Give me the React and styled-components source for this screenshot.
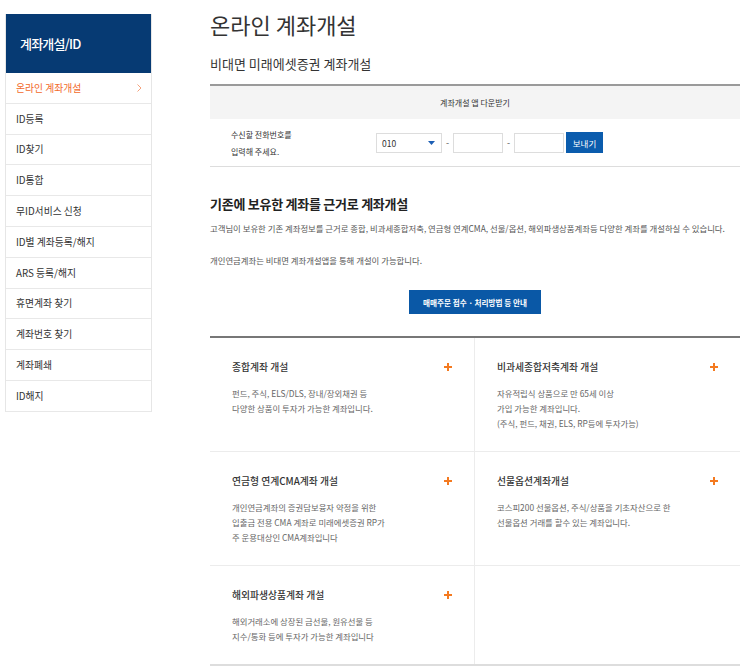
import React from "react";
import styled, { createGlobalStyle } from "styled-components";

const GlobalStyle = createGlobalStyle`
  body {
    margin: 0;
    background: #fff;
    font-family: "Noto Sans CJK KR", "Noto Sans", sans-serif;
    color: #333;
  }
  * { box-sizing: border-box; }
`;

const Page = styled.div`
  display: flex;
  align-items: flex-start;
  width: 743px;
`;

const SideBar = styled.nav`
  width: 147px;
  margin: 14px 0 0 5px;
  border-left: 1px solid #e6e6e6;
  border-right: 1px solid #e6e6e6;
`;

const SideTitle = styled.h2`
  margin: 0;
  height: 59px;
  display: flex;
  align-items: center;
  padding-left: 14px;
  background: #063a73;
  color: #fff;
  font-size: 13px;
  font-weight: 500;
  letter-spacing: -0.06em;
`;

const MenuItem = styled.div`
  height: 30.8px;
  display: flex;
  align-items: center;
  justify-content: space-between;
  padding: 0 9px 0 10px;
  border-bottom: 1px solid #e8e8e8;
  font-size: 9.8px;
  color: ${p => (p.$active ? "#f26a2b" : "#333")};
`;

const Main = styled.main`
  width: 530px;
  margin-left: 58px;
  padding-top: 8px;
`;

const PageTitle = styled.h1`
  margin: 0;
  font-size: 22px;
  line-height: 32px;
  font-weight: 400;
  color: #333;
`;

const SubTitle = styled.h3`
  margin: 14px 0 0;
  font-size: 13px;
  line-height: 20px;
  font-weight: 400;
  color: #333;
`;

const Table = styled.div`
  margin-top: 10px;
  border-top: 2px solid #9a9a9a;
  border-bottom: 1px solid #ddd;
`;

const TableHead = styled.div`
  height: 33px;
  display: flex;
  align-items: center;
  justify-content: center;
  background: #f4f4f4;
  font-size: 8px;
  color: #333;
`;

const FormRow = styled.div`
  height: 47px;
  display: flex;
  align-items: center;
`;

const FormLabel = styled.div`
  width: 166px;
  padding-left: 21px;
  font-size: 8px;
  line-height: 17px;
  color: #333;
`;

const Controls = styled.div`
  display: flex;
  align-items: center;
`;

const Select = styled.div`
  width: 66px;
  height: 20px;
  display: flex;
  align-items: center;
  justify-content: space-between;
  padding: 0 6px 0 5px;
  border: 1px solid #ddd;
  font-size: 8.5px;
  color: #333;
`;

const Dash = styled.span`
  width: 11px;
  text-align: center;
  font-size: 9px;
  color: #555;
`;

const Input = styled.div`
  width: 50px;
  height: 20px;
  border: 1px solid #ddd;
  background: #fff;
`;

const SendButton = styled.button`
  margin-left: 2px;
  width: 37px;
  height: 21px;
  border: 0;
  padding: 0;
  background: #0b5cad;
  color: #fff;
  font-family: inherit;
  font-size: 8.5px;
`;

const SectionTitle = styled.h3`
  margin: 27px 0 0;
  font-size: 13px;
  line-height: 20px;
  font-weight: 700;
  letter-spacing: -0.02em;
  color: #222;
`;

const Text = styled.p`
  margin: ${p => p.$gap || 6}px 0 0;
  font-size: 8.4px;
  line-height: 16px;
  color: #555;
`;

const GuideButton = styled.button`
  display: block;
  margin: 22px auto 0;
  width: 132px;
  height: 24px;
  border: 0;
  padding: 0;
  background: #0a58a6;
  color: #fff;
  font-family: inherit;
  font-size: 7.6px;
  font-weight: 700;
`;

const Grid = styled.div`
  margin-top: 22px;
  display: grid;
  grid-template-columns: 1fr 1fr;
  border-top: 2px solid #777;
  border-bottom: 2px solid #ddd;
`;

const Cell = styled.div`
  padding: 22px 22px 20px 22px;
  border-right: ${p => (p.$left ? "1px solid #ececec" : "0")};
  border-bottom: ${p => (p.$last ? "0" : "1px solid #ececec")};
`;

const CellHead = styled.div`
  display: flex;
  align-items: center;
  justify-content: space-between;
`;

const CellTitle = styled.h4`
  margin: 0;
  font-size: 9.8px;
  line-height: 14px;
  font-weight: 500;
  color: #333;
`;

const CellText = styled.p`
  margin: 12px 0 0;
  font-size: 8.4px;
  line-height: 15px;
  color: #666;
`;

const Plus = () => (
  <svg width="8" height="8" viewBox="0 0 8 8">
    <path d="M4 0v8M0 4h8" stroke="#f47a20" strokeWidth="2" />
  </svg>
);

const Chevron = () => (
  <svg width="5" height="8" viewBox="0 0 5 8">
    <path d="M0.5 0.5l3.5 3.5-3.5 3.5" fill="none" stroke="#f5a27c" strokeWidth="1" />
  </svg>
);

const menu = [
  "온라인 계좌개설",
  "ID등록",
  "ID찾기",
  "ID통합",
  "무ID서비스 신청",
  "ID별 계좌등록/해지",
  "ARS 등록/해지",
  "휴면계좌 찾기",
  "계좌번호 찾기",
  "계좌폐쇄",
  "ID해지"
];

const accounts = [
  {
    title: "종합계좌 개설",
    lines: ["펀드, 주식, ELS/DLS, 장내/장외채권 등", "다양한 상품이 투자가 가능한 계좌입니다."]
  },
  {
    title: "비과세종합저축계좌 개설",
    lines: ["자유적립식 상품으로 만 65세 이상", "가입 가능한 계좌입니다.", "(주식, 펀드, 채권, ELS, RP등에 투자가능)"]
  },
  {
    title: "연금형 연계CMA계좌 개설",
    lines: [
      "개인연금계좌의 증권담보융자 약정을 위한",
      "입출금 전용 CMA 계좌로 미래에셋증권 RP가",
      "주 운용대상인 CMA계좌입니다"
    ]
  },
  {
    title: "선물옵션계좌개설",
    lines: ["코스피200 선물옵션, 주식/상품을 기초자산으로 한", "선물옵션 거래를 할수 있는 계좌입니다."]
  },
  {
    title: "해외파생상품계좌 개설",
    lines: ["해외거래소에 상장된 금선물, 원유선물 등", "지수/통화 등에 투자가 가능한 계좌입니다"]
  }
];

const App = () => (
  <Page>
    <GlobalStyle />
    <SideBar>
      <SideTitle>계좌개설/ID</SideTitle>
      {menu.map((label, i) => (
        <MenuItem key={label} $active={i === 0}>
          {label}
          {i === 0 && <Chevron />}
        </MenuItem>
      ))}
    </SideBar>

    <Main>
      <PageTitle>온라인 계좌개설</PageTitle>
      <SubTitle>비대면 미래에셋증권 계좌개설</SubTitle>

      <Table>
        <TableHead>계좌개설 앱 다운받기</TableHead>
        <FormRow>
          <FormLabel>
            수신할 전화번호를
            <br />
            입력해 주세요.
          </FormLabel>
          <Controls>
            <Select>
              010
              <svg width="7" height="4" viewBox="0 0 7 4">
                <path d="M0 0h7L3.5 4z" fill="#1d5fb4" />
              </svg>
            </Select>
            <Dash>-</Dash>
            <Input />
            <Dash>-</Dash>
            <Input />
            <SendButton>보내기</SendButton>
          </Controls>
        </FormRow>
      </Table>

      <SectionTitle>기존에 보유한 계좌를 근거로 계좌개설</SectionTitle>
      <Text>
        고객님이 보유한 기존 계좌정보를 근거로 종합, 비과세종합저축, 연금형 연계CMA, 선물/옵션,
        해외파생상품계좌등 다양한 계좌를 개설하실 수 있습니다.
      </Text>
      <Text $gap={16}>개인연금계좌는 비대면 계좌개설앱을 통해 개설이 가능합니다.</Text>
      <GuideButton>매매주문 접수 · 처리방법 등 안내</GuideButton>

      <Grid>
        {accounts.map((acc, i) => (
          <Cell key={acc.title} $left={i % 2 === 0} $last={i >= 4}>
            <CellHead>
              <CellTitle>{acc.title}</CellTitle>
              <Plus />
            </CellHead>
            <CellText>
              {acc.lines.map((line, j) => (
                <React.Fragment key={j}>
                  {line}
                  {j < acc.lines.length - 1 && <br />}
                </React.Fragment>
              ))}
            </CellText>
          </Cell>
        ))}
        <Cell $last />
      </Grid>
    </Main>
  </Page>
);

export default App;
